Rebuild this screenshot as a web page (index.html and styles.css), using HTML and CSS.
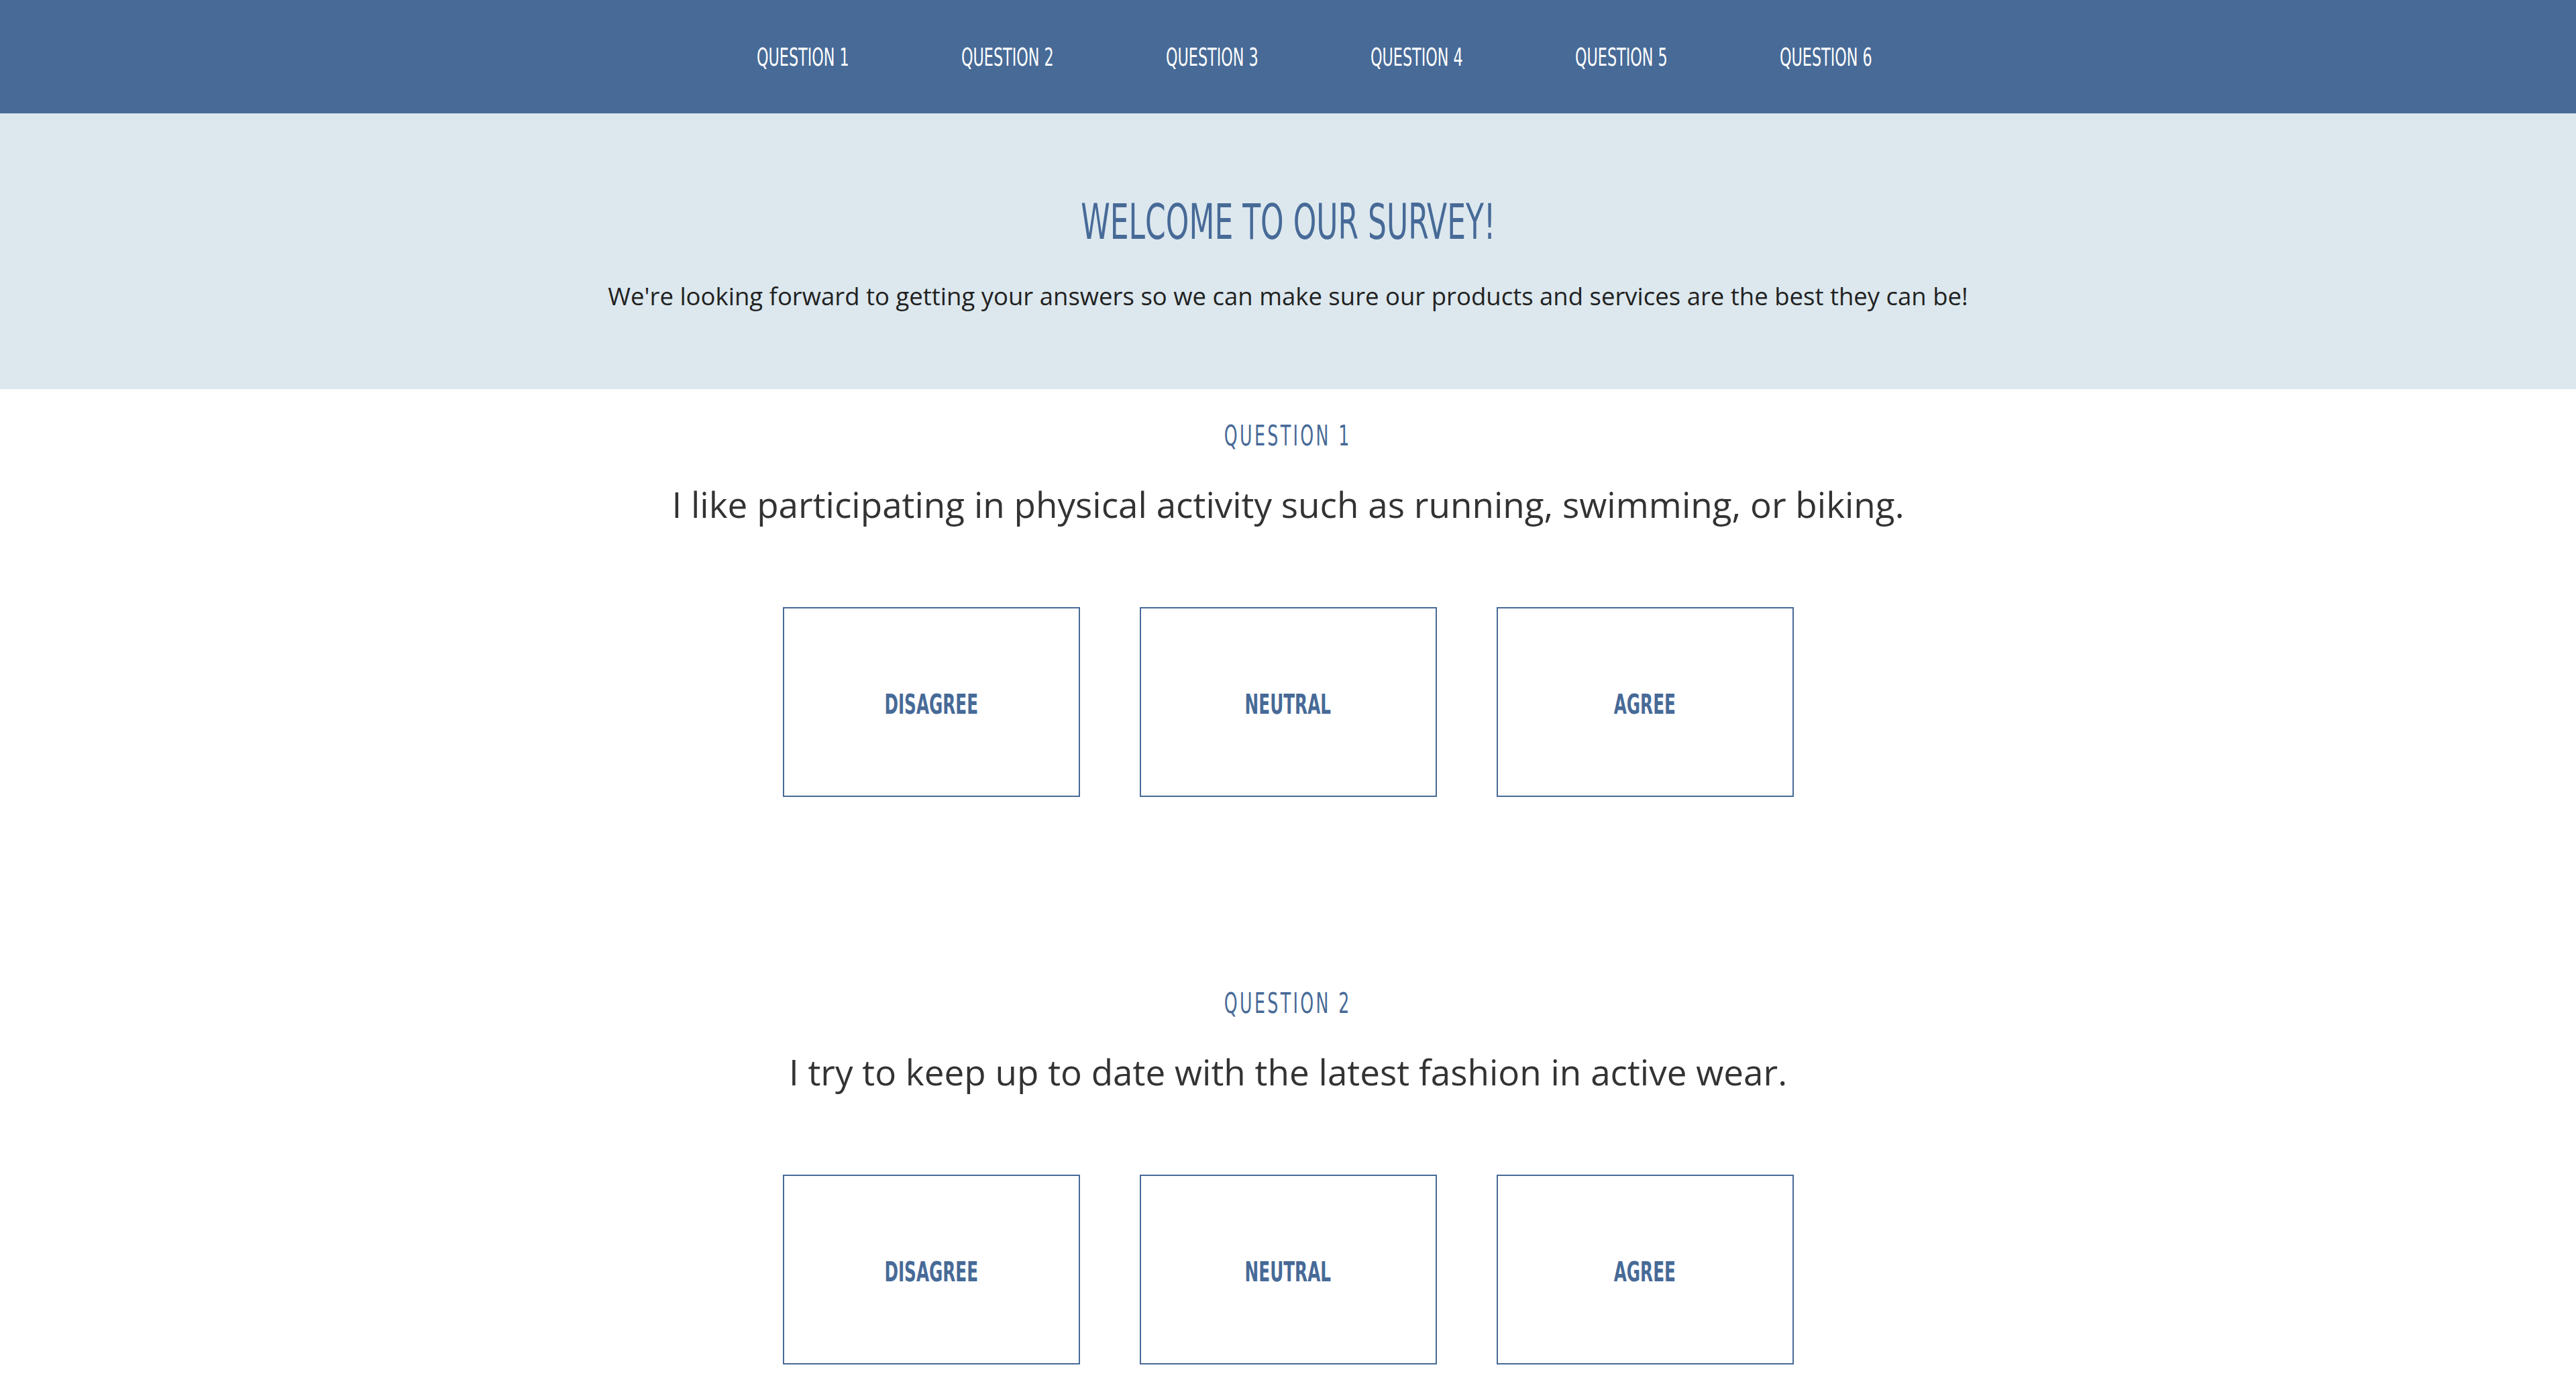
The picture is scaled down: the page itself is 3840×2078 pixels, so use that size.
FILE: index.html
```html
<!DOCTYPE html>
<html lang="en">
<head>
<meta charset="utf-8">
<title>Survey</title>
<link rel="stylesheet" href="styles.css">
</head>
<body>
<nav class="topnav">
  <ul class="nav-list">
    <li class="nav-item"><a class="nav-link" href="#q1"><span class="cond">QUESTION 1</span></a></li>
    <li class="nav-item"><a class="nav-link" href="#q2"><span class="cond">QUESTION 2</span></a></li>
    <li class="nav-item"><a class="nav-link" href="#q3"><span class="cond">QUESTION 3</span></a></li>
    <li class="nav-item"><a class="nav-link" href="#q4"><span class="cond">QUESTION 4</span></a></li>
    <li class="nav-item"><a class="nav-link" href="#q5"><span class="cond">QUESTION 5</span></a></li>
    <li class="nav-item"><a class="nav-link" href="#q6"><span class="cond">QUESTION 6</span></a></li>
  </ul>
</nav>
<header class="hero">
  <h1 class="hero-title"><span class="cond">WELCOME TO OUR SURVEY!</span></h1>
  <p class="hero-text">We're looking forward to getting your answers so we can make sure our products and services are the best they can be!</p>
</header>
<main class="survey">
  <section class="question" id="q1">
    <h2 class="q-label"><span class="cond">QUESTION 1</span></h2>
    <p class="q-text">I like participating in physical activity such as running, swimming, or biking.</p>
    <div class="answers">
      <button class="answer"><span class="cond">DISAGREE</span></button>
      <button class="answer"><span class="cond">NEUTRAL</span></button>
      <button class="answer"><span class="cond">AGREE</span></button>
    </div>
  </section>
  <section class="question" id="q2">
    <h2 class="q-label"><span class="cond">QUESTION 2</span></h2>
    <p class="q-text">I try to keep up to date with the latest fashion in active wear.</p>
    <div class="answers">
      <button class="answer"><span class="cond">DISAGREE</span></button>
      <button class="answer"><span class="cond">NEUTRAL</span></button>
      <button class="answer"><span class="cond">AGREE</span></button>
    </div>
  </section>
</main>
</body>
</html>
```
FILE: styles.css
```css
* { box-sizing: border-box; }
html, body { margin: 0; padding: 0; }
body {
  background: #ffffff;
  font-family: "Open Sans", "DejaVu Sans", sans-serif;
  color: #333333;
}
.cond {
  display: inline-block;
  font-family: "DejaVu Sans", sans-serif;
  font-stretch: condensed;
  transform: scaleX(0.67);
  white-space: nowrap;
}
.topnav {
  background: #476a97;
  height: 169px;
  display: flex;
  align-items: center;
  justify-content: center;
}
.nav-list {
  list-style: none;
  margin: 0;
  padding: 0 0 0 78px;
  display: flex;
}
.nav-item { width: 305px; text-align: center; }
.nav-link {
  color: #ffffff;
  text-decoration: none;
  font-size: 37px;
  line-height: 44px;
}
.hero {
  background: #dce8ee;
  padding: 119px 0 117px;
  text-align: center;
}
.hero-title {
  margin: 0;
  color: #476a97;
  font-weight: normal;
  font-size: 73px;
  line-height: 80px;
}
.hero-text {
  margin: 48px 0 0;
  font-size: 36.5px;
  line-height: 44px;
  color: #222;
}
.survey { padding-bottom: 100px; }
.question {
  text-align: center;
  padding-top: 43px;
  padding-bottom: 238px;
}
.q-label {
  margin: 0;
  color: #476a97;
  font-weight: normal;
  font-size: 42px;
  line-height: 50px;
  letter-spacing: 5px;
}
.q-text {
  margin: 47px 0 0;
  font-size: 53px;
  line-height: 60px;
}
.answers {
  margin-top: 123px;
  display: flex;
  justify-content: center;
  gap: 89px;
}
.answer {
  width: 443px;
  height: 283px;
  background: #ffffff;
  border: 2px solid #476a97;
  color: #476a97;
  font-size: 41px;
  font-weight: bold;
  display: flex;
  align-items: center;
  justify-content: center;
  padding: 6px 0 0;
  cursor: pointer;
}
```
